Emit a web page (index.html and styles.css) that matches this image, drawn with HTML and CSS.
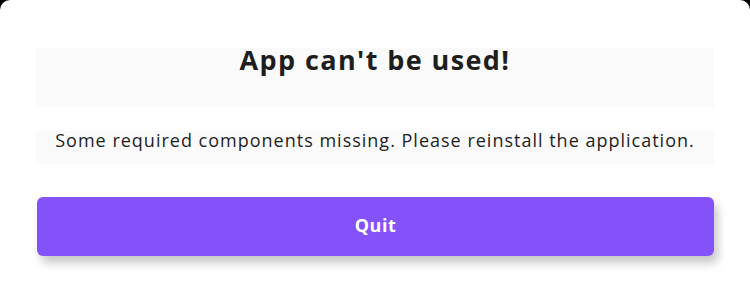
FILE: index.html
```html
<!doctype html>
<html>
	<head>
		<title>App can't be used</title>
		<meta charset="utf-8" />
		<meta name="viewport" content="width=device-width, initial-scale=1" />
		<link rel="stylesheet" href="styles.css">
	</head>
	<body>
		<div id="card">
			<h1 class="title">App can't be used!</h1>
			<p class="message">Some required components missing. Please reinstall the application.</p>
			<button class="quit">Quit</button>
		</div>
	</body>
</html>
```

FILE: styles.css
```css
html, body {
	height: 100%;
}

body {
	background-color: black;
	margin: 0;
	font-family: "Open Sans", Lato, sans-serif;
	color: #1e1e1e;
}

#card {
	background-color: white;
	border-radius: 10px 10px 0 0;
	min-height: 100%;
	padding: 48px 36px 0 36px;
	box-sizing: border-box;
	display: flex;
	flex-direction: column;
}

.title {
	background-color: #fafafa;
	margin: 0;
	height: 59px;
	font-size: 27px;
	line-height: 24px;
	font-weight: 700;
	letter-spacing: 1.4px;
	text-align: center;
	box-sizing: border-box;
	padding-top: 0;
}

.message {
	background-color: #fafafa;
	margin: 24px 0 0 0;
	height: 33px;
	font-size: 18px;
	line-height: 16px;
	letter-spacing: 1px;
	text-align: center;
	padding-top: 1px;
	box-sizing: border-box;
}

.quit {
	margin: 33px 0 0 1px;
	height: 59px;
	border: none;
	border-radius: 6px;
	background-color: #8551f8;
	color: white;
	font-family: inherit;
	font-size: 18px;
	font-weight: 700;
	letter-spacing: 0.5px;
	padding-bottom: 4px;
	box-shadow: 4px 7px 10px rgba(0, 0, 0, 0.22);
}
```
